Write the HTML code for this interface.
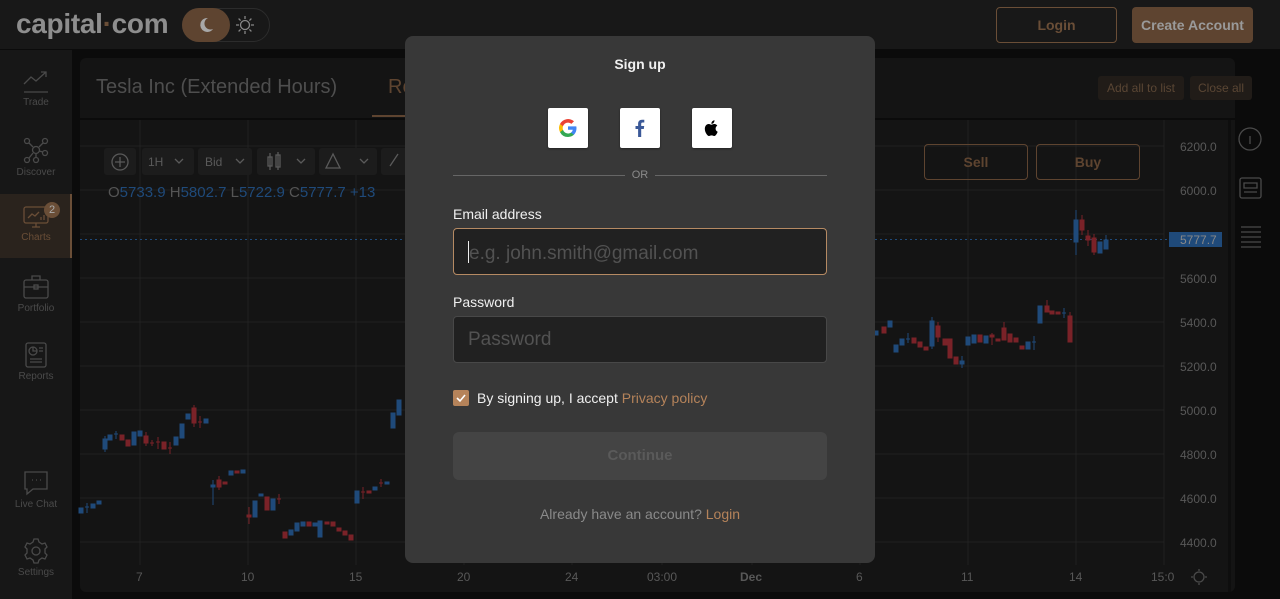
<!DOCTYPE html>
<html><head><meta charset="utf-8"><style>
*{box-sizing:border-box;margin:0;padding:0}
body{width:1280px;height:599px;overflow:hidden;background:#0b0b0b;font-family:"Liberation Sans",Arial,sans-serif;position:relative}
.abs{position:absolute}
.hdr{left:0;top:0;width:1280px;height:49px;background:#181818}
.side{left:0;top:50px;width:72px;height:549px;background:#171717}
.nav{position:absolute;left:0;width:72px;text-align:center;font-size:10px;color:#4a4a4a}
.nav svg{display:block;margin:0 auto 3px}
.panel{left:80px;top:58px;width:1155px;height:534px;background:#141414;border-radius:6px}
.btn{position:absolute;border-radius:4px;font-weight:bold;font-size:14px;text-align:center}
.modal{left:405px;top:36px;width:470px;height:527px;background:#383838;border-radius:8px}
.soc{position:absolute;top:72px;width:40px;height:40px;background:#fff;border-radius:2px;box-shadow:0 1px 2px rgba(0,0,0,.4)}
.lbl{position:absolute;left:48px;font-size:14px;color:#f0f0f0}
.inp{position:absolute;left:48px;width:374px;height:47px;background:#212121;border-radius:4px;font-size:19px;color:#525252;padding:12px 14px}
</style></head><body>
<div class="abs hdr"></div>
<div class="abs" style="left:16px;top:8px;font-size:28px;font-weight:bold;color:#8e8e8e;letter-spacing:-0.3px">capital<span style="color:#6a4e37">·</span>com</div>
<div class="abs" style="left:182px;top:8px;width:88px;height:34px;border:1px solid #2c2c2c;border-radius:17px"></div>
<div class="abs" style="left:182px;top:8px;width:48px;height:34px;background:#5e4430;border-radius:17px"></div>
<svg class="abs" style="left:196px;top:15px" width="20" height="20"><path d="M12 3a7 7 0 1 0 5 11a6 6 0 0 1-5-11z" fill="#a8a8a8"/></svg>
<svg class="abs" style="left:235px;top:15px" width="20" height="20" stroke="#888" fill="none" stroke-width="1.3"><circle cx="10" cy="10" r="4.5"/><path d="M10 1v3M10 16v3M1 10h3M16 10h3M3.6 3.6l2 2M14.4 14.4l2 2M3.6 16.4l2-2M14.4 5.6l2-2"/></svg>
<div class="btn" style="left:996px;top:7px;width:121px;height:36px;border:1px solid #6a4e37;color:#6a4e37;line-height:34px">Login</div>
<div class="btn" style="left:1132px;top:7px;width:121px;height:36px;background:#5e4430;color:#9a9a9a;line-height:36px">Create Account</div>

<div class="abs side"></div>
<div class="nav" style="top:68px"><svg width="26" height="26" stroke="#4a4a4a" fill="none" stroke-width="1.3"><path d="M1 16l7-7 5 4 10-9M18 4h5v5M1 24h24"/></svg>Trade</div>
<div class="nav" style="top:136px"><svg width="26" height="28" stroke="#4a4a4a" fill="none" stroke-width="1.3"><circle cx="13" cy="14" r="3.5"/><circle cx="4" cy="5" r="2.5"/><circle cx="22" cy="5" r="2.5"/><circle cx="4" cy="24" r="2.5"/><circle cx="13" cy="24" r="2.5"/><circle cx="22" cy="17" r="2.5"/><path d="M6 7l4 4M20 7l-4 4M6 22l4-5M13 18v4M16 15l4 1"/></svg>Discover</div>
<div class="abs" style="left:0;top:194px;width:72px;height:64px;background:#2a231d;border-right:2px solid #6a4e37"></div>
<div class="nav" style="top:205px;color:#6a4e37"><svg width="26" height="24" stroke="#6a4e37" fill="none" stroke-width="1.3"><rect x="1" y="2" width="24" height="16" rx="2"/><path d="M5 13l4-4 3 2 4-4M9 22h8M13 18v4M18 15v-3M21 15v-5"/></svg>Charts</div>
<div class="abs" style="left:44px;top:202px;width:16px;height:16px;border-radius:8px;background:#6a4e37;color:#aaa;font-size:11px;text-align:center;line-height:16px">2</div>
<div class="nav" style="top:274px"><svg width="26" height="26" stroke="#4a4a4a" fill="none" stroke-width="1.3"><rect x="1" y="6" width="24" height="18" rx="2"/><path d="M9 6V2h8v4M1 13h24"/><rect x="11" y="11" width="4" height="4"/></svg>Portfolio</div>
<div class="nav" style="top:342px"><svg width="26" height="26" stroke="#4a4a4a" fill="none" stroke-width="1.3"><rect x="3" y="1" width="20" height="24" rx="2"/><circle cx="10" cy="9" r="4"/><path d="M10 5v4h4M16 6h4M16 9h4M7 17h12M7 20h12"/></svg>Reports</div>
<div class="nav" style="top:470px"><svg width="26" height="26" stroke="#4a4a4a" fill="none" stroke-width="1.3"><path d="M2 2h22v17H10l-6 5v-5H2z"/><path d="M9 10h1M13 10h1M17 10h1"/></svg>Live Chat</div>
<div class="nav" style="top:538px"><svg width="26" height="26" stroke="#4a4a4a" fill="none" stroke-width="1.3"><circle cx="13" cy="13" r="4"/><path d="M11 1h4l1 3 3 2 3-1 2 4-2 2v4l2 2-2 4-3-1-3 2-1 3h-4l-1-3-3-2-3 1-2-4 2-2v-4L2 9l2-4 3 1 3-2z"/></svg>Settings</div>

<div class="abs panel"></div>
<div class="abs" style="left:96px;top:76px;font-size:20px;color:#4e4e4e">Tesla Inc (Extended Hours)</div>
<div class="abs" style="left:388px;top:76px;font-size:20px;color:#5e4430">Re</div>
<div class="abs" style="left:372px;top:115px;width:40px;height:2px;background:#5e4430"></div>
<div class="abs" style="left:80px;top:118px;width:1155px;height:2px;background:#0b0b0b"></div>
<div class="abs" style="left:1098px;top:76px;width:86px;height:24px;background:#211c18;border-radius:3px;color:#5a4634;font-size:12px;text-align:center;line-height:24px">Add all to list</div>
<div class="abs" style="left:1190px;top:76px;width:62px;height:24px;background:#211c18;border-radius:3px;color:#5a4634;font-size:12px;text-align:center;line-height:24px">Close all</div>
<div class="abs" style="left:1228px;top:120px;width:3px;height:472px;background:#0e0e0e"></div>

<svg class="abs" style="left:0;top:0" width="1280" height="599">
<g stroke="#212121" stroke-width="1">
<path d="M140 120V565M248 120V565M356 120V565M464 120V565M572 120V565M662 120V565M752 120V565M860 120V565M968 120V565M1076 120V565M1164 120V565"/>
<path d="M80 146H1164M80 190H1164M80 234H1164M80 278H1164M80 322H1164M80 366H1164M80 410H1164M80 454H1164M80 498H1164M80 542H1164"/>
</g>
<path d="M80 239.5H1170" stroke="#1f4a7a" stroke-dasharray="2 3"/>
<rect x="1169" y="232" width="53" height="15" fill="#1f4a7a"/>
<text x="1180" y="244" font-size="12" fill="#888" font-family="Liberation Sans">5777.7</text>
<g font-family="Liberation Sans" font-size="12" fill="#585858">
<text x="1180" y="151">6200.0</text><text x="1180" y="195">6000.0</text><text x="1180" y="283">5600.0</text><text x="1180" y="327">5400.0</text><text x="1180" y="371">5200.0</text><text x="1180" y="415">5000.0</text><text x="1180" y="459">4800.0</text><text x="1180" y="503">4600.0</text><text x="1180" y="547">4400.0</text>
<text x="136" y="581">7</text><text x="241" y="581">10</text><text x="349" y="581">15</text><text x="457" y="581">20</text><text x="565" y="581">24</text><text x="647" y="581">03:00</text><text x="740" y="581" font-weight="bold">Dec</text><text x="856" y="581">6</text><text x="961" y="581">11</text><text x="1069" y="581">14</text><text x="1151" y="581">15:0</text>
</g>
<g stroke-width="1">
<g fill="#1f4a7a" stroke="#1f4a7a">
<rect x="79" y="508" width="4" height="5"/><path d="M87 503v10M85 507h4"/><rect x="91" y="504" width="4" height="4"/><rect x="97" y="501" width="4" height="3"/>
<rect x="103" y="439" width="4" height="10"/><path d="M105 436v16"/><rect x="108" y="435" width="4" height="5"/><path d="M116 431v8M114 434h4"/><rect x="132" y="432" width="4" height="13"/><rect x="138" y="431" width="4" height="5"/><rect x="174" y="437" width="4" height="8"/><rect x="180" y="424" width="4" height="14"/><rect x="186" y="414" width="4" height="5"/><rect x="204" y="419" width="4" height="4"/>
<rect x="211" y="485" width="4" height="2"/><path d="M213 480v25"/><rect x="229" y="471" width="4" height="4"/><rect x="241" y="470" width="4" height="3"/>
<rect x="253" y="501" width="4" height="16"/><rect x="259" y="494" width="4" height="2"/><rect x="271" y="499" width="4" height="11"/>
<rect x="289" y="530" width="4" height="5"/><rect x="295" y="523" width="4" height="8"/><rect x="301" y="522" width="4" height="4"/><rect x="313" y="523" width="4" height="3"/><rect x="318" y="521" width="4" height="16"/>
<rect x="355" y="491" width="4" height="12"/><rect x="373" y="487" width="4" height="3"/><rect x="385" y="482" width="4" height="2"/>
<rect x="391" y="413" width="4" height="15"/><rect x="397" y="400" width="4" height="15"/>
<rect x="874" y="331" width="4" height="4"/><rect x="888" y="321" width="4" height="6"/><rect x="894" y="345" width="4" height="7"/><rect x="900" y="339" width="4" height="6"/><path d="M908 333v10M906 339h4"/><rect x="930" y="321" width="4" height="25"/><path d="M932 317v32"/><rect x="960" y="361" width="4" height="3"/><path d="M962 356v12"/><rect x="966" y="337" width="4" height="8"/><rect x="972" y="335" width="4" height="8"/><rect x="984" y="336" width="4" height="7"/><rect x="1026" y="342" width="4" height="7"/><path d="M1034 336v14M1032 342h4"/><rect x="1038" y="306" width="4" height="17"/><path d="M1064 308v10M1062 313h4"/>
<rect x="1074" y="220" width="4" height="22"/><path d="M1076 210v45"/><rect x="1098" y="242" width="4" height="11"/><rect x="1104" y="240" width="4" height="9"/><path d="M1106 235v12"/>
</g>
<g fill="#7a2228" stroke="#7a2228">
<rect x="120" y="435" width="4" height="5"/><rect x="126" y="440" width="4" height="6"/><rect x="144" y="436" width="4" height="7"/><path d="M146 432v14M152 440v6M150 443h4M158 437v12M156 442h4"/><rect x="162" y="442" width="4" height="7"/><path d="M170 442v12M168 448h4"/><rect x="192" y="408" width="4" height="15"/><path d="M194 405v22M200 416v12M198 422h4"/>
<rect x="217" y="480" width="4" height="7"/><path d="M219 476v14"/><rect x="223" y="482" width="4" height="2"/><rect x="235" y="471" width="4" height="2"/>
<rect x="247" y="515" width="4" height="2"/><path d="M249 507v17"/><rect x="265" y="497" width="4" height="13"/><path d="M279 494v10M277 499h4"/>
<rect x="283" y="532" width="4" height="6"/><rect x="307" y="522" width="4" height="4"/><rect x="325" y="522" width="4" height="2"/><rect x="331" y="522" width="4" height="4"/><rect x="337" y="528" width="4" height="3"/><rect x="343" y="531" width="4" height="4"/><rect x="349" y="535" width="4" height="5"/>
<path d="M363 487v12M361 492h4"/><rect x="367" y="491" width="4" height="2"/><path d="M381 479v8M379 483h4"/>
<rect x="882" y="327" width="4" height="6"/><rect x="912" y="338" width="4" height="5"/><rect x="918" y="342" width="4" height="5"/><rect x="924" y="347" width="4" height="3"/><rect x="936" y="326" width="4" height="11"/><path d="M938 322v20"/><rect x="943" y="339" width="4" height="6"/><rect x="948" y="339" width="4" height="19"/><rect x="954" y="357" width="4" height="7"/><rect x="978" y="335" width="4" height="7"/><rect x="990" y="335" width="4" height="2"/><path d="M992 333v12"/><rect x="996" y="339" width="4" height="2"/><rect x="1002" y="328" width="4" height="12"/><path d="M1004 322v18"/><rect x="1008" y="334" width="4" height="8"/><rect x="1014" y="338" width="4" height="4"/><rect x="1020" y="346" width="4" height="3"/>
<rect x="1045" y="306" width="4" height="6"/><path d="M1047 300v10"/><rect x="1050" y="311" width="4" height="3"/><rect x="1056" y="312" width="4" height="2"/><rect x="1068" y="316" width="4" height="26"/><path d="M1070 312v6"/>
<rect x="1080" y="220" width="4" height="10"/><path d="M1082 215v20"/><rect x="1086" y="236" width="4" height="4"/><path d="M1088 230v16"/><rect x="1092" y="238" width="4" height="14"/><path d="M1094 234v21"/>
</g>
</g>
<g fill="#1c1c1c"><rect x="104" y="148" width="32" height="27" rx="3"/><rect x="142" y="148" width="52" height="27" rx="3"/><rect x="198" y="148" width="54" height="27" rx="3"/><rect x="257" y="148" width="58" height="27" rx="3"/><rect x="319" y="148" width="58" height="27" rx="3"/><rect x="381" y="148" width="30" height="27" rx="3"/></g>
<g stroke="#5a5a5a" fill="none" stroke-width="1.3"><circle cx="120" cy="162" r="8"/><path d="M120 157v10M115 162h10M175 159l4 4 4-4M236 159l4 4 4-4M297 159l4 4 4-4M360 159l4 4 4-4M333 154l-7 14h14zM398 154l-8 12"/><rect x="268" y="157" width="4" height="9"/><rect x="276" y="155" width="4" height="12"/><path d="M270 153v17M278 152v18"/></g>
<g font-family="Liberation Sans" font-size="12" fill="#5a5a5a"><text x="148" y="166">1H</text><text x="205" y="166">Bid</text></g>
<g font-family="Liberation Sans" font-size="15"><text x="108" y="197" fill="#555">O<tspan fill="#1f4a7a">5733.9</tspan> H<tspan fill="#1f4a7a">5802.7</tspan> L<tspan fill="#1f4a7a">5722.9</tspan> C<tspan fill="#1f4a7a">5777.7</tspan> <tspan fill="#1f4a7a">+13</tspan></text></g>
<g stroke="#4a4a4a" fill="none" stroke-width="1.3"><circle cx="1250" cy="139" r="11"/><path d="M1250 136v8"/><rect x="1240" y="178" width="21" height="20" rx="2"/><path d="M1244 183h13v5h-13zM1244 192h13"/><path d="M1241 227h20M1241 232h20M1241 237h20M1241 242h20M1241 247h20"/><circle cx="1199" cy="577" r="5"/><path d="M1199 569v2M1199 583v2M1191 577h2M1205 577h2"/></g>
</svg>
<div class="btn" style="left:924px;top:144px;width:104px;height:36px;border:1px solid #5e4430;color:#5e4430;line-height:34px">Sell</div>
<div class="btn" style="left:1036px;top:144px;width:104px;height:36px;border:1px solid #5e4430;color:#5e4430;line-height:34px">Buy</div>

<div class="abs modal">
<div style="position:absolute;left:0;top:20px;width:470px;text-align:center;font-size:14px;font-weight:bold;color:#f0f0f0">Sign up</div>
<div class="soc" style="left:143px"><svg width="40" height="40" viewBox="0 0 40 40"><path d="M28.5 20.2c0-.6-.1-1.2-.2-1.8H20v3.4h4.8a4 4 0 0 1-1.8 2.7v2.2h2.9c1.7-1.6 2.6-3.9 2.6-6.5z" fill="#4285f4"/><path d="M20 29c2.4 0 4.400-.8 5.9-2.2L23 24.6c-.8.5-1.8.9-3 .9-2.3 0-4.3-1.6-5-3.7h-3v2.3A9 9 0 0 0 20 29z" fill="#34a853"/><path d="M15 21.8a5.4 5.4 0 0 1 0-3.5V16h-3a9 9 0 0 0 0 8.1z" fill="#fbbc05"/><path d="M20 14.6c1.3 0 2.5.5 3.4 1.3l2.6-2.6A9 9 0 0 0 12 16l3 2.3c.7-2.1 2.7-3.7 5-3.7z" fill="#ea4335"/></svg></div>
<div class="soc" style="left:215px"><svg width="40" height="40"><path d="M21.2 29v-8h2.6l.4-3h-3v-2c0-.9.3-1.5 1.5-1.5h1.6v-2.7c-.3 0-1.2-.1-2.3-.1-2.3 0-3.9 1.4-3.9 4V18H15.5v3h2.6v8z" fill="#3b5998"/></svg></div>
<div class="soc" style="left:287px"><svg width="40" height="40"><path d="M23.6 20.6c0-2 1.6-2.9 1.7-3-1-1.4-2.400-1.600-2.900-1.600-1.2-.1-2.4.7-3 .7-.6 0-1.6-.7-2.6-.7-1.3 0-2.6.8-3.3 2-1.4 2.4-.4 6 1 8 .7 1 1.5 2 2.5 2 1 0 1.4-.6 2.6-.6s1.5.6 2.6.6 1.7-1 2.4-2c.7-1.1 1-2.2 1.1-2.3-.1 0-2.1-.8-2.1-3.1zM21.7 14.7c.5-.7.9-1.6.8-2.5-.8 0-1.8.5-2.3 1.2-.5.6-.9 1.5-.8 2.4.9.1 1.8-.4 2.3-1.1z" fill="#000"/></svg></div>
<div style="position:absolute;left:48px;top:139px;width:172px;height:1px;background:#666"></div>
<div style="position:absolute;left:250px;top:139px;width:172px;height:1px;background:#666"></div>
<div style="position:absolute;left:0;top:133px;width:470px;text-align:center;font-size:11px;color:#8a8a8a">OR</div>
<div class="lbl" style="top:170px">Email address</div>
<div class="inp" style="top:192px;border:1px solid #b58a63"><span style="display:inline-block;width:1px;height:22px;background:#eee;vertical-align:-4px"></span>e.g. john.smith@gmail.com</div>
<div class="lbl" style="top:258px">Password</div>
<div class="inp" style="top:280px;border:1px solid #484848">Password</div>
<div style="position:absolute;left:48px;top:354px;width:16px;height:16px;background:#b5835a;border-radius:2px"><svg width="16" height="16"><path d="M4 8l3 3 5-6" stroke="#fff" stroke-width="1.6" fill="none"/></svg></div>
<div style="position:absolute;left:72px;top:354px;font-size:14px;color:#f0f0f0">By signing up, I accept <span style="color:#b5835a">Privacy policy</span></div>
<div style="position:absolute;left:48px;top:396px;width:374px;height:48px;background:#444;border-radius:6px;text-align:center;line-height:48px;font-size:15px;font-weight:bold;color:#5a5a5a">Continue</div>
<div style="position:absolute;left:0;top:470px;width:470px;text-align:center;font-size:14px;color:#8a8a8a">Already have an account? <span style="color:#b5835a">Login</span></div>
</div>
</body></html>
